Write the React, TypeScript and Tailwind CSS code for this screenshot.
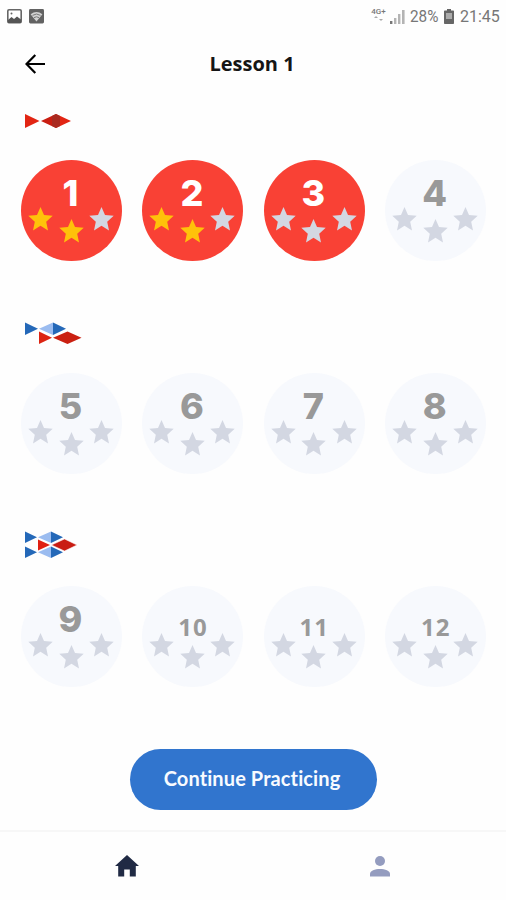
import clsx from 'clsx';

type Lesson = { id: number; stars: number; unlocked?: boolean };

const ROWS: Lesson[][] = [
  [
    { id: 1, stars: 2, unlocked: true },
    { id: 2, stars: 2, unlocked: true },
    { id: 3, stars: 0, unlocked: true },
    { id: 4, stars: 0 },
  ],
  [5, 6, 7, 8].map((id) => ({ id, stars: 0 })),
  [9, 10, 11, 12].map((id) => ({ id, stars: 0 })),
];

function StatusBar() {
  return (
    <div className="flex h-8 items-center justify-between pl-[7px] pr-[6px] text-[#777]">
      <div className="flex gap-[7px]">
        <svg width="15" height="15" viewBox="0 0 15 15">
          <rect x="0.8" y="0.8" width="13.4" height="13" rx="1.2" fill="#fff" stroke="#666" strokeWidth="1.6" />
          <path d="M1 11l3.5-3 2.5 2 3-2.5 4 3V14H1z" fill="#555" />
          <circle cx="4.5" cy="4.4" r="1" fill="#666" />
        </svg>
        <svg width="15" height="15" viewBox="0 0 15 15">
          <rect width="15" height="14.5" rx="1.4" fill="#626262" />
          <path d="M1.6 5.2Q7.5 0.6 13.4 5.2L7.5 12.5z" fill="#d2d2d2" />
          <path d="M3.5 6.4Q7.5 3.6 11.5 6.4M5 8.6Q7.5 7 10 8.6" fill="none" stroke="#777" strokeWidth="1" />
        </svg>
      </div>
      <div className="flex items-center font-[Roboto,sans-serif] text-[17px] leading-none">
        <div className="mr-1 flex h-4 w-[15px] flex-col items-center text-[8px] font-medium leading-[8px]">
          <span>4G+</span>
          <svg width="9" height="5" viewBox="0 0 9 5">
            <path d="M0 2l2-2 2 2zM2 5V2M5 3h4L7 5z" fill="#aaa" />
          </svg>
        </div>
        <svg className="mr-[5px]" width="15" height="15" viewBox="0 0 15 15">
          <path d="M0 12h2.4v3H0z" fill="#777" />
          <path d="M4 9h2.4v6H4zM8 5h2.4v10H8zM12 1h2.6v14H12z" fill="#b4b4b4" />
        </svg>
        <span className="w-[29px] origin-left scale-x-[.9] whitespace-nowrap">28%</span>
        <svg className="ml-[5px] mr-[6px]" width="10" height="15" viewBox="0 0 10 15">
          <path d="M3 0h4v1.5h2.2q.8 0 .8.8v11.9q0 .8-.8.8H.8q-.8 0-.8-.8V2.3q0-.8.8-.8H3z" fill="#666" />
          <path d="M2 4h6v6H2z" fill="#ababab" />
        </svg>
        <span className="w-10 origin-left scale-x-[.94] whitespace-nowrap">21:45</span>
      </div>
    </div>
  );
}

function Flags({ level }: { level: number }) {
  if (level === 0) {
    return (
      <svg width="60" height="30" viewBox="0 0 60 30">
        <path d="M0 8v14l14.5-7z" fill="#e22513" />
        <path d="M16 15l15-7v14z" fill="#c91e12" />
        <path d="M31 8l15 7-15 7z" fill="#e22513" />
        <path d="M27 10l4-2 4 2v10l-4 2-4-2z" fill="#a92a20" />
      </svg>
    );
  }
  if (level === 1) {
    return (
      <svg width="60" height="30" viewBox="0 -2 60 30">
        <path d="M0 1.5v12.5l13-6.2z" fill="#2468b8" />
        <path d="M14 7.8l14-6.3v12.5z" fill="#9bbcf0" />
        <path d="M28 1.5l13 6.3L28 14z" fill="#2468b8" />
        <path d="M14 10.5v12.5l13-6.2z" fill="#dc2412" />
        <path d="M28 16.8l14.5-6.3L56.5 16.8 42.5 23z" fill="#ca2011" />
      </svg>
    );
  }
  return (
    <svg className="overflow-visible" width="60" height="30" viewBox="0 2.500 60 30">
      <path d="M0 2v11.5l12-5.7zM0 17v11.5l12-5.7z" fill="#2468b8" />
      <path d="M13 7.8L26 2v11.5zM13 22.8L26 17v11.5z" fill="#9bbcf0" />
      <path d="M26 2l12 5.8-12 5.7zM26 17l12 5.8-12 5.7z" fill="#2468b8" />
      <path d="M13 10v11l12-5.5z" fill="#e01f12" />
      <path d="M26.500 15.500L39.500 9.500l12.500 6-12.500 6z" fill="#c91c12" stroke="#fff" strokeWidth=".5" />
    </svg>
  );
}

function Star({ filled, middle }: { filled: boolean; middle: boolean }) {
  return (
    <svg
      className={clsx('h-6 w-[25px]', middle && 'mt-3', filled ? 'text-[#ffc20a]' : 'text-[#d3d7e2]')}
      viewBox="0 0 25 24"
      fill="currentColor"
    >
      <path d="M12.500 0L16 7.900l8.700.9-6.500 5.900L20 23.500l-7.500-4.700L5 23.500l1.800-8.800L.3 8.800 9 7.900z" />
    </svg>
  );
}

function LessonCircle({ lesson }: { lesson: Lesson }) {
  return (
    <button
      type="button"
      className={clsx('h-[101px] w-[101px] shrink-0 rounded-full', lesson.unlocked ? 'bg-[#f94135]' : 'bg-[#f7f9fd]')}
    >
      <div className="flex h-full flex-col items-center">
        <span
          className={clsx(
            'flex h-[47px] justify-center',
            lesson.id > 9
              ? 'pt-[26px] text-[24px] font-bold leading-[30px] tracking-[1px]'
              : "pr-[2px] pt-[13px] font-['Inter',sans-serif] text-[36px] font-extrabold leading-[41px]",
            lesson.unlocked ? 'text-white' : 'text-[#999]',
          )}
        >
          {lesson.id}
        </span>
        <div className="flex gap-[5.500px] pr-[1px]">
          {[0, 2, 1].map((rank, i) => (
            <Star key={i} middle={i === 1} filled={lesson.stars > (rank === 2 ? 1 : rank * 2)} />
          ))}
        </div>
      </div>
    </button>
  );
}

export default function App() {
  return (
    <div className="flex h-[900px] w-[506px] flex-col overflow-hidden bg-[#fefefe] font-['Open_Sans',sans-serif]">
      <StatusBar />
      <header className="grid h-[64px] grid-cols-[60px_1fr_60px] items-center pl-[25px] pr-[27px]">
        <button type="button" aria-label="Back">
          <svg width="21" height="20" viewBox="0 0 21 20" fill="none" stroke="#000" strokeWidth="2.200">
            <path d="M10.300 1L1.500 10l8.800 9M1.500 10H20" />
          </svg>
        </button>
        <h1 className="text-center text-[20px] font-bold text-[#151515]">Lesson 1</h1>
      </header>

      <main className="flex flex-col gap-[58px] px-[21px] pt-[10px]">
        {ROWS.map((row, level) => (
          <section key={level} className="h-[155px]">
            <div className="ml-1 h-[54px]">
              <Flags level={level} />
            </div>
            <div className="flex gap-[20.400px]">
              {row.map((lesson) => (
                <LessonCircle key={lesson.id} lesson={lesson} />
              ))}
            </div>
          </section>
        ))}
      </main>

      <button
        type="button"
        className="mx-auto mt-[62px] h-[61px] w-[247px] shrink-0 rounded-full bg-[#3175ce] pr-[2px] pb-[4px] font-[Lato,sans-serif] text-[20px] font-bold tracking-[0.1px] text-[#f8fbff] [font-variant-ligatures:none]"
      >
        Continue Practicing
      </button>

      <nav className="mt-auto grid h-[70px] shrink-0 grid-cols-2 place-items-center border-t-2 border-[#f7f7f7]">
        <svg width="24" height="22" viewBox="0 0 24 22" fill="#202a44">
          <path d="M12 0l12 11h-3.200v10.500h-6v-7H9.200v7h-6V11H0z" />
        </svg>
        <svg width="20" height="21" viewBox="0 0 20 21" fill="#949cbf">
          <circle cx="10" cy="5" r="5" />
          <path d="M0 20.500v-2.500c0-3.500 5-5 10-5s10 1.500 10 5v2.500z" />
        </svg>
      </nav>
    </div>
  );
}
